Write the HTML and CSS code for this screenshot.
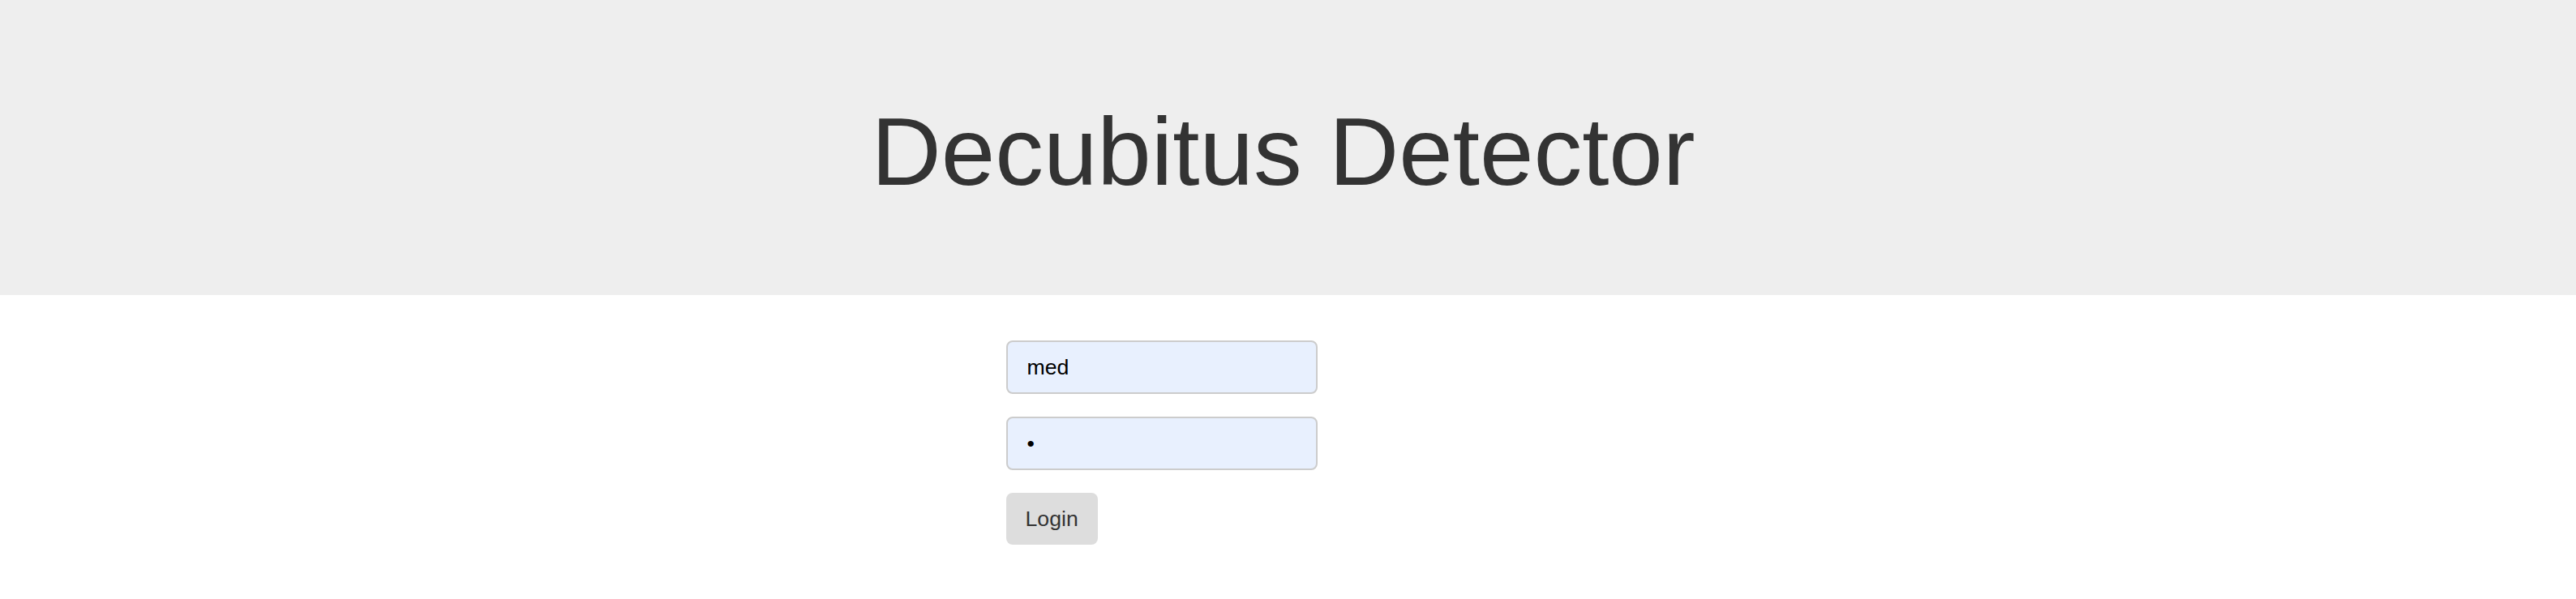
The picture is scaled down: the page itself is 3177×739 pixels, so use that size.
FILE: index.html
```html
<!DOCTYPE html>
<html lang="en">
<head>
<meta charset="utf-8">
<title>Decubitus Detector</title>
<link rel="stylesheet" href="styles.css">
</head>
<body>
<header class="site-header">
  <h1 class="site-title">Decubitus Detector</h1>
</header>
<main class="content">
  <form class="login-form">
    <input class="field" type="text" name="username" value="med">
    <input class="field" type="password" name="password" value="1">
    <button class="login-btn" type="button">Login</button>
  </form>
</main>
</body>
</html>
```

FILE: styles.css
```css
html, body {
  margin: 0;
  padding: 0;
  background: #ffffff;
}

body {
  font-family: "Liberation Sans", Arial, sans-serif;
}

.site-header {
  background: #eeeeee;
  height: 364px;
  box-sizing: border-box;
  padding: 118px 12px 0 0;
  text-align: center;
}

.site-title {
  margin: 0;
  font-size: 119.5px;
  line-height: 138px;
  font-weight: normal;
  color: #333333;
}

.content {
  width: 696px;
  margin: 0 auto;
  padding-top: 56px;
}

.login-form {
  display: flex;
  flex-direction: column;
  align-items: flex-start;
  gap: 28px;
}

.field {
  box-sizing: border-box;
  width: 384px;
  height: 66px;
  margin: 0;
  padding: 0 24px;
  border: 2px solid #cccccc;
  border-radius: 8px;
  background: #e8f0fe;
  font-family: "Liberation Sans", Arial, sans-serif;
  font-size: 26.67px;
  color: #000000;
  outline: none;
}

.login-btn {
  box-sizing: border-box;
  height: 64px;
  margin: 0;
  padding: 0 24px;
  border: none;
  border-radius: 8px;
  background: #dddddd;
  font-family: "Liberation Sans", Arial, sans-serif;
  font-size: 26.67px;
  color: #333333;
  cursor: pointer;
}
```
